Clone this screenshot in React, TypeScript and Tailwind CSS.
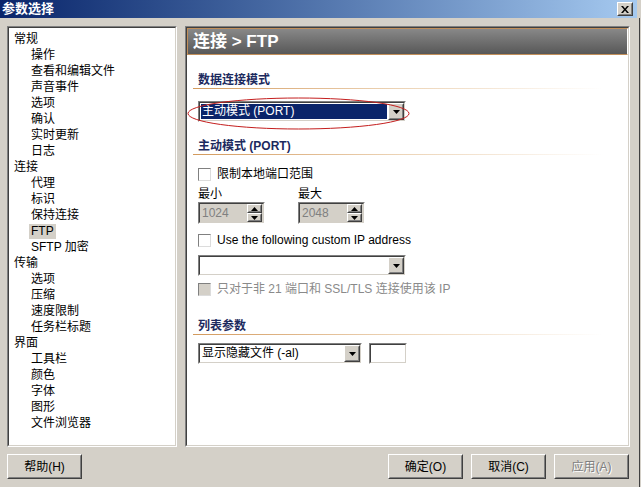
const font = "font-['Liberation_Sans','Noto_Sans_CJK_SC',sans-serif]";

type TreeItem = { label: string; level: 0 | 1; selected?: boolean };

const tree: TreeItem[] = [
  { label: "常规", level: 0 },
  { label: "操作", level: 1 },
  { label: "查看和编辑文件", level: 1 },
  { label: "声音事件", level: 1 },
  { label: "选项", level: 1 },
  { label: "确认", level: 1 },
  { label: "实时更新", level: 1 },
  { label: "日志", level: 1 },
  { label: "连接", level: 0 },
  { label: "代理", level: 1 },
  { label: "标识", level: 1 },
  { label: "保持连接", level: 1 },
  { label: "FTP", level: 1, selected: true },
  { label: "SFTP 加密", level: 1 },
  { label: "传输", level: 0 },
  { label: "选项", level: 1 },
  { label: "压缩", level: 1 },
  { label: "速度限制", level: 1 },
  { label: "任务栏标题", level: 1 },
  { label: "界面", level: 0 },
  { label: "工具栏", level: 1 },
  { label: "颜色", level: 1 },
  { label: "字体", level: 1 },
  { label: "图形", level: 1 },
  { label: "文件浏览器", level: 1 },
];

function Sunken({ className = "", inner = "", children }: { className?: string; inner?: string; children?: React.ReactNode }) {
  return (
    <div className={`border border-t-[#808080] border-l-[#808080] border-r-white border-b-white ${className}`}>
      <div className={`h-full border border-t-[#404040] border-l-[#404040] border-r-[#d4d0c8] border-b-[#d4d0c8] ${inner}`}>
        {children}
      </div>
    </div>
  );
}

function Raised({ className = "", inner = "", children }: { className?: string; inner?: string; children?: React.ReactNode }) {
  return (
    <div className={`border border-t-white border-l-white border-r-[#404040] border-b-[#404040] bg-[#d4d0c8] ${className}`}>
      <div className={`h-full border border-t-[#d4d0c8] border-l-[#d4d0c8] border-r-[#808080] border-b-[#808080] ${inner}`}>
        {children}
      </div>
    </div>
  );
}

function Arrow({ up = false }: { up?: boolean }) {
  return (
    <svg width="7" height="4" viewBox="0 0 7 4">
      <path d={up ? "M3.5 0L7 4H0z" : "M0 0h7L3.5 4z"} fill="#000" />
    </svg>
  );
}

function Combo({ width, text, selected = false }: { width: string; text?: string; selected?: boolean }) {
  return (
    <Sunken className={`${width} h-[21px]`} inner="flex bg-white">
      <div className="flex-1 p-px">
        <div className={`h-full pl-px leading-[15px] text-[12px] ${selected ? "bg-[#0a246a] text-white" : "text-black"}`}>{text}</div>
      </div>
      <Raised className="w-[16px]" inner="flex items-center justify-center">
        <Arrow />
      </Raised>
    </Sunken>
  );
}

function Spin({ value }: { value: string }) {
  return (
    <Sunken className="w-[67px] h-[22px]" inner="flex bg-[#d4d0c8]">
      <div className="flex-1 pl-[2px] leading-[18px] text-[12px] text-[#808080]">{value}</div>
      <div className="w-[15px] flex flex-col mr-px">
        <Raised className="h-[9px]" inner="flex items-center justify-center">
          <Arrow up />
        </Raised>
        <Raised className="h-[9px]" inner="flex items-center justify-center">
          <Arrow />
        </Raised>
      </div>
    </Sunken>
  );
}

function Check({ label, disabled = false, className = "" }: { label: string; disabled?: boolean; className?: string }) {
  return (
    <div className={`flex items-center h-[16px] text-[12px] ${className}`}>
      <div
        className={`w-[13px] h-[13px] border border-t-[#808080] border-l-[#808080] border-r-[#dcdcdc] border-b-[#dcdcdc] ${
          disabled ? "bg-[#d4d0c8]" : "bg-white"
        }`}
      />
      <span className={`ml-[6px] ${disabled ? "text-[#8a8a8a]" : "text-black"}`}>{label}</span>
    </div>
  );
}

function SectionTitle({ label, className = "" }: { label: string; className?: string }) {
  return (
    <div className={`-ml-[5px] ${className}`}>
      <div className="pl-[5px] h-[16px] pt-px leading-[14px] text-[12px] font-bold text-[#1c2a5e]">{label}</div>
      <div className="h-px w-[410px] bg-linear-to-r from-[#d39a5c] via-[#ecd3b5] to-white" />
    </div>
  );
}

function Button({ label, disabled = false }: { label: string; disabled?: boolean }) {
  return (
    <Raised className="w-[75px] h-[25px]" inner="flex items-center justify-center">
      <span className={`text-[12px] ${disabled ? "text-[#808080] [text-shadow:1px_1px_0_#fff]" : "text-black"}`}>{label}</span>
    </Raised>
  );
}

export default function App() {
  return (
    <div className={`w-[641px] h-[487px] flex bg-[#d4d0c8] overflow-hidden ${font}`}>
      <div className="w-[637px] flex flex-col">
        {/* title bar */}
        <div className="h-[18px] flex items-center justify-between bg-linear-to-r from-[#0a246a] to-[#a6caf0]">
          <span className="pl-[2px] text-[13px] font-bold text-white leading-[18px]">参数选择</span>
          <Raised className="w-[16px] h-[14px] mr-[4px]" inner="flex items-center justify-center">
            <svg width="8" height="7" viewBox="0 0 8 7">
              <path d="M0 0h2l2 2.5L6 0h2L5 3.5 8 7H6L4 4.5 2 7H0l3-3.5z" fill="#000" />
            </svg>
          </Raised>
        </div>

        {/* main */}
        <div className="mt-[8px] pl-[7px] flex gap-[8px] h-[421px]">
          <Sunken className="w-[170px] h-full" inner="bg-white pt-[3px]">
            {tree.map((item, i) => (
              <div key={i} className={`h-[16px] leading-[16px] text-[12px] text-black ${item.level === 0 ? "pl-[5px]" : "pl-[22px]"}`}>
                <span className={item.selected ? "bg-[#d4d0c8] px-[2px] -ml-[2px] inline-block leading-[15px]" : ""}>{item.label}</span>
              </div>
            ))}
          </Sunken>

          <Sunken className="w-[445px] h-full relative" inner="bg-white flex flex-col">
            <div className="h-[27px] border border-[#c28f5a] border-r-white bg-linear-to-b from-[#888888] to-[#585858] flex items-center pl-[5px]">
              <span className="text-[17px] font-bold text-white">连接 &gt; FTP</span>
            </div>
            <div className="pl-[11px] flex flex-col">
              <SectionTitle label="数据连接模式" className="mt-[17px]" />
              <div className="mt-[12px]">
                <Combo width="w-[208px]" text="主动模式 (PORT)" selected />
              </div>
              <SectionTitle label="主动模式 (PORT)" className="mt-[16px]" />
              <Check label="限制本地端口范围" className="mt-[11px]" />
              <div className="mt-[4px] flex h-[16px] leading-[16px] text-[12px] text-black">
                <span className="w-[100px]">最小</span>
                <span>最大</span>
              </div>
              <div className="flex gap-[33px]">
                <Spin value="1024" />
                <Spin value="2048" />
              </div>
              <Check label="Use the following custom IP address" className="mt-[8px]" />
              <div className="mt-[7px]">
                <Combo width="w-[208px]" />
              </div>
              <Check label="只对于非 21 端口和 SSL/TLS 连接使用该 IP" disabled className="mt-[5px]" />
              <SectionTitle label="列表参数" className="mt-[21px]" />
              <div className="mt-[8px] flex gap-[7px]">
                <Combo width="w-[164px]" text="显示隐藏文件 (-al)" />
                <Sunken className="w-[38px] h-[21px]" inner="bg-white" />
              </div>
            </div>
            <svg className="absolute left-[1px] top-[70px]" width="223" height="33" viewBox="0 0 223 33">
              <ellipse cx="111.5" cy="16.5" rx="110.5" ry="15.5" fill="none" stroke="#c41e1e" strokeWidth="1" />
            </svg>
          </Sunken>
        </div>

        {/* buttons */}
        <div className="mt-[7px] pl-[7px] pr-[8px] flex justify-between">
          <Button label="帮助(H)" />
          <div className="flex gap-[8px]">
            <Button label="确定(O)" />
            <Button label="取消(C)" />
            <Button label="应用(A)" disabled />
          </div>
        </div>
      </div>
      <div className="w-[4px] flex justify-end pt-[18px]">
        <div className="w-px mr-px h-full bg-[#404040]" />
      </div>
    </div>
  );
}
